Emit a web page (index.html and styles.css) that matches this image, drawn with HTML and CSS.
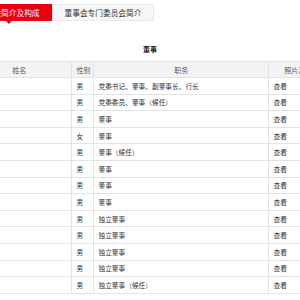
FILE: index.html
```html
<!DOCTYPE html>
<html lang="zh-CN">
<head>
    <meta charset="UTF-8">
    <meta name="viewport" content="width=device-width, initial-scale=1.0">
    <title>董事会简介及构成</title>
    <link rel="stylesheet" href="styles.css">
</head>
<body>
    <div class="page">
        <div class="tabs">
            <div class="tab active">董事会简介及构成</div>
            <div class="tab">董事会专门委员会简介</div>
        </div>

        <h3 class="title">董事</h3>

        <table class="members">
            <colgroup>
                <col class="c-name">
                <col class="c-sex">
                <col class="c-post">
                <col class="c-photo">
            </colgroup>
            <thead>
                <tr>
                    <th>姓名</th>
                    <th>性别</th>
                    <th>职务</th>
                    <th>照片及简历</th>
                </tr>
            </thead>
            <tbody>
                <tr><td></td><td>男</td><td>党委书记、董事、副董事长、行长</td><td>查看</td></tr>
                <tr><td></td><td>男</td><td>党委委员、董事（候任）</td><td>查看</td></tr>
                <tr><td></td><td>男</td><td>董事</td><td>查看</td></tr>
                <tr><td></td><td>女</td><td>董事</td><td>查看</td></tr>
                <tr><td></td><td>男</td><td>董事（候任）</td><td>查看</td></tr>
                <tr><td></td><td>男</td><td>董事</td><td>查看</td></tr>
                <tr><td></td><td>男</td><td>董事</td><td>查看</td></tr>
                <tr><td></td><td>男</td><td>董事</td><td>查看</td></tr>
                <tr><td></td><td>男</td><td>独立董事</td><td>查看</td></tr>
                <tr><td></td><td>男</td><td>独立董事</td><td>查看</td></tr>
                <tr><td></td><td>男</td><td>独立董事</td><td>查看</td></tr>
                <tr><td></td><td>男</td><td>独立董事</td><td>查看</td></tr>
                <tr><td></td><td>男</td><td>独立董事（候任）</td><td>查看</td></tr>
            </tbody>
        </table>
    </div>
</body>
</html>
```

FILE: styles.css
```css
*{
    box-sizing: border-box;
    font-family: "Noto Sans CJK SC", "Noto Sans", sans-serif;
}
body{
    margin: 0;
    padding: 0;
    background: #fff;
    color: #333;
    overflow: hidden;
}

/* the page is wider than the window, cut on both sides */
.page{
    margin: 0 -34px;
    width: 368px;
}

.tabs{
    display: flex;
    margin-top: 4px;
}
.tab{
    position: relative;
    height: 17px;
    line-height: 15px;
    padding: 0 12px;
    font-size: 7.7px;
    color: #333;
    background: #f7f7f7;
    border: 1px solid #e8e8e8;
}
.tab.active{
    padding: 0 11px;
    color: #fff;
    background: #e60012;
    border-color: #e60012;
}
.tab.active::after{
    content: "";
    position: absolute;
    left: 50%;
    bottom: -4px;
    margin-left: -3px;
    border-left: 3px solid transparent;
    border-right: 3px solid transparent;
    border-top: 3px solid #e60012;
}

.title{
    margin: 23px 0 0;
    height: 11px;
    line-height: 11px;
    text-align: center;
    font-size: 7px;
    font-weight: bold;
    color: #222;
}

.members{
    margin-top: 6px;
    width: 368px;
    border-collapse: collapse;
    table-layout: fixed;
    border: 1px solid #e3e3e3;
}
.c-name{ width: 105px; }
.c-sex{ width: 22px; }
.c-post{ width: 175px; }
.c-photo{ width: 66px; }

.members th,
.members td{
    padding: 0 4px 0 4.5px;
    border: 1px solid #e3e3e3;
    white-space: nowrap;
    overflow: hidden;
}
.members th{
    height: 16px;
    background: #f3f3f3;
    font-size: 7px;
    font-weight: normal;
    color: #555;
    text-align: center;
}
.members td{
    height: 16.6px;
    font-size: 6.7px;
    color: #333;
    text-align: left;
}
```
